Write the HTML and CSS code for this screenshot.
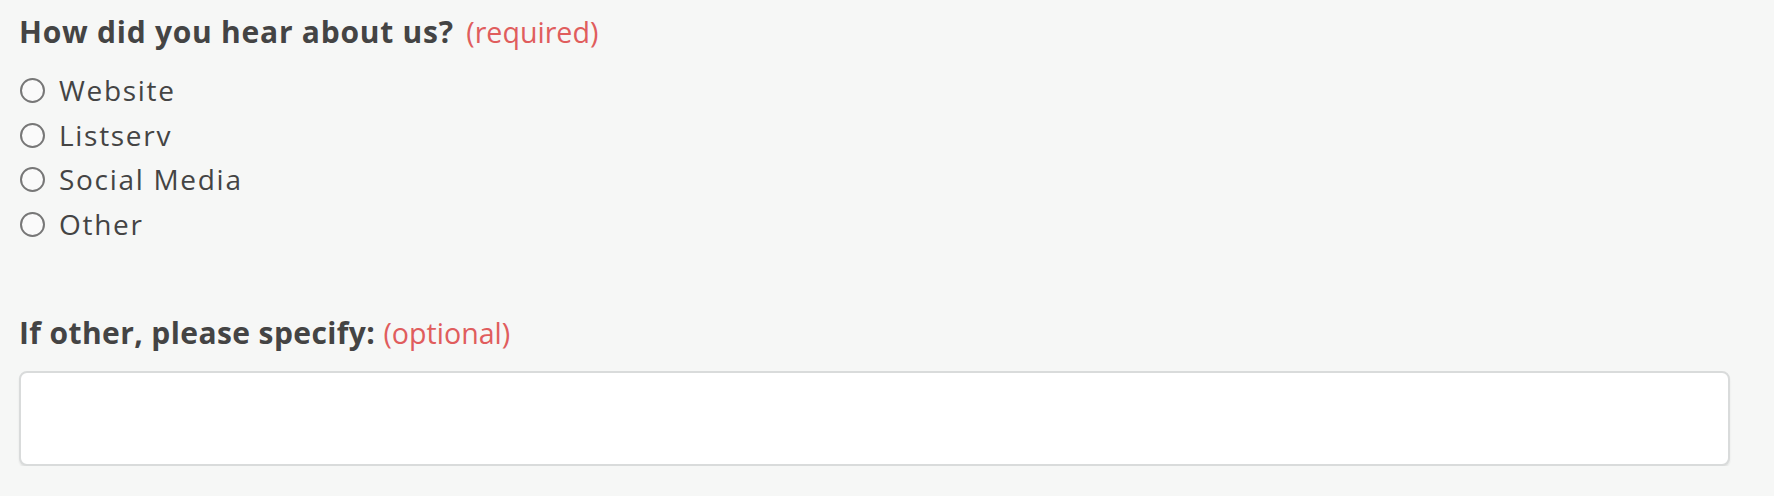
FILE: index.html
```html
<!DOCTYPE html>
<html lang="en">
<head>
  <meta charset="UTF-8" />
  <meta name="viewport" content="width=device-width, initial-scale=1" />
  <title>How did you hear about us?</title>
  <link rel="stylesheet" href="styles.css">
</head>
<body>
  <form class="survey">
    <fieldset class="field">
      <legend class="field-label">How did you hear about us? <span class="hint hint-wide">(required)</span></legend>
      <div class="options">
        <label class="option"><input type="radio" name="source" value="website" /> <span>Website</span></label>
        <label class="option"><input type="radio" name="source" value="listserv" /> <span>Listserv</span></label>
        <label class="option"><input type="radio" name="source" value="social" /> <span>Social Media</span></label>
        <label class="option"><input type="radio" name="source" value="other" /> <span>Other</span></label>
      </div>
    </fieldset>

    <div class="field field-other">
      <label class="field-label field-label-tight" for="other">If other, please specify: <span class="hint">(optional)</span></label>
      <input id="other" class="text-input" type="text" name="other" />
    </div>
  </form>
</body>
</html>
```

FILE: styles.css
```css
:root {
  --page-bg: #f6f7f6;
  --text-main: #444444;
  --text-hint: #e05d5d;
  --border: #d9dbdb;
  --radius: 8px;
}
body {
  margin: 0;
  padding: 0 44px 0 19px;
  background: var(--page-bg);
  color: var(--text-main);
  font-family: "Open Sans", "Liberation Sans", sans-serif;
}
.survey {
  padding-top: 10px;
}
.field {
  border: none;
  margin: 0;
  padding: 0;
}
.field-label {
  display: block;
  padding: 0;
  font-size: 30px;
  font-weight: 700;
  line-height: 44px;
  letter-spacing: 0.75px;
}
.field-label-tight {
  letter-spacing: 0.4px;
}
.hint {
  color: var(--text-hint);
  font-size: 28.6px;
  font-weight: 400;
  letter-spacing: 0;
}
.hint-wide {
  margin-left: 4px;
}
.options {
  display: flex;
  flex-direction: column;
  margin-top: 14px;
}
.option {
  display: flex;
  align-items: center;
  gap: 14px;
  font-size: 28px;
  letter-spacing: 1.7px;
  line-height: 44.7px;
  height: 44.7px;
}
.option input[type="radio"] {
  appearance: none;
  -webkit-appearance: none;
  width: 25px;
  height: 25px;
  margin: 0 0 0 1px;
  border: 2px solid #777777;
  border-radius: 50%;
  background: #fafafa;
}
.field-other {
  margin-top: 64px;
}
.text-input {
  display: block;
  box-sizing: border-box;
  width: 100%;
  height: 95px;
  margin-top: 16px;
  border: 2px solid var(--border);
  border-radius: var(--radius);
  background: #ffffff;
  box-shadow: 0 2px 2px rgba(0, 0, 0, 0.08);
  outline: none;
}
```
